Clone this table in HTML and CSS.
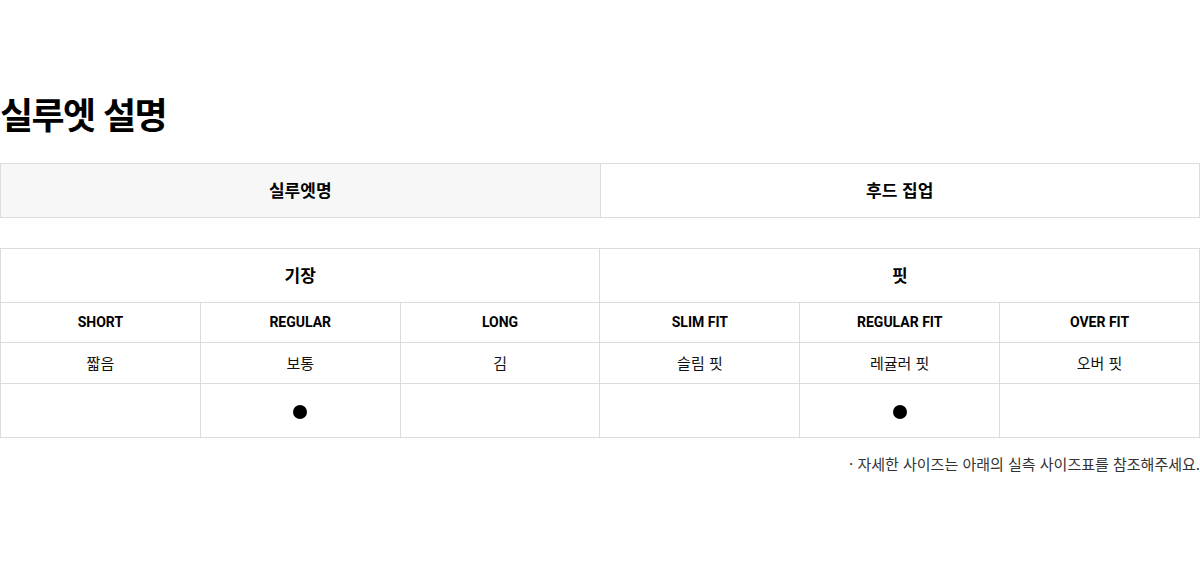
FILE: index.html
```html
<!DOCTYPE html>
<html lang="ko">
<head>
<meta charset="utf-8">
<link rel="stylesheet" href="styles.css">
</head>
<body>
<section class="silhouette">
  <h2 class="title">실루엣 설명</h2>
  <table class="tbl name-tbl">
    <tr>
      <th class="label">실루엣명</th>
      <td class="value">후드 집업</td>
    </tr>
  </table>
  <table class="tbl fit-tbl">
    <tr class="group">
      <th colspan="3">기장</th>
      <th colspan="3">핏</th>
    </tr>
    <tr class="eng">
      <td>SHORT</td><td>REGULAR</td><td>LONG</td>
      <td>SLIM FIT</td><td>REGULAR FIT</td><td>OVER FIT</td>
    </tr>
    <tr class="kor">
      <td>짧음</td><td>보통</td><td>김</td>
      <td>슬림 핏</td><td>레귤러 핏</td><td>오버 핏</td>
    </tr>
    <tr class="mark">
      <td></td><td><span class="dot"></span></td><td></td>
      <td></td><td><span class="dot"></span></td><td></td>
    </tr>
  </table>
  <p class="note">· 자세한 사이즈는 아래의 실측 사이즈표를 참조해주세요.</p>
</section>
</body>
</html>
```

FILE: styles.css
```css
html, body {
  margin: 0;
  padding: 0;
  background: #fff;
}
body {
  font-family: "Noto Sans CJK KR", "Noto Sans", sans-serif;
  color: #000;
}
.silhouette {
  padding-top: 90px;
}
.title {
  margin: 0 0 27px 0;
  font-size: 36px;
  font-weight: 700;
  line-height: 46px;
  letter-spacing: -1.6px;
}
.tbl {
  width: 1200px;
  border-collapse: collapse;
  table-layout: fixed;
}
.tbl th, .tbl td {
  border: 1px solid #dcdcdc;
  text-align: center;
  padding: 0 0 3px 0;
}
.name-tbl th, .name-tbl td {
  height: 50px;
  font-size: 17px;
  font-weight: 700;
}
.name-tbl .label {
  background: #f7f7f7;
}
.fit-tbl {
  margin-top: 30px;
}
.fit-tbl .group th {
  height: 50px;
  font-size: 17px;
  font-weight: 700;
}
.fit-tbl .eng td {
  height: 38px;
  padding-bottom: 1px;
  font-family: Roboto, "Noto Sans CJK KR", sans-serif;
  font-weight: 700;
  font-size: 14px;
}
.fit-tbl .kor td {
  height: 38px;
  padding-bottom: 2px;
  font-size: 15px;
  color: #111;
}
.fit-tbl .mark td {
  height: 51px;
  padding-bottom: 2px;
}
.dot {
  display: inline-block;
  width: 14px;
  height: 14px;
  border-radius: 50%;
  background: #000;
  vertical-align: middle;
}
.note {
  margin: 15px 0 0 0;
  text-align: right;
  font-size: 15px;
  color: #333;
  letter-spacing: 0;
}
```
